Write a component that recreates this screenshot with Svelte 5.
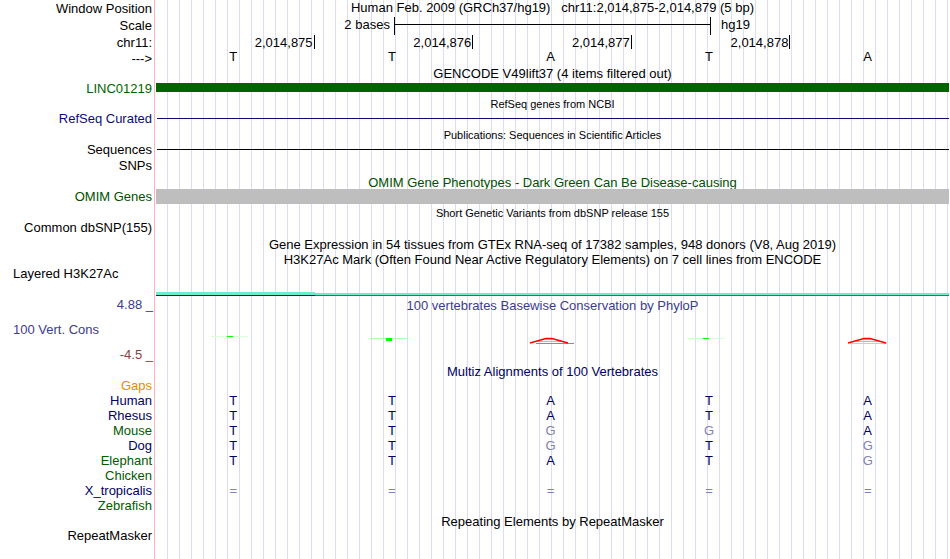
<script>
	// base positions shown in the window, one column each
	const ticks = ['2,014,875', '2,014,876', '2,014,877', '2,014,878', ''];
	const bases = ['T', 'T', 'A', 'T', 'A'];

	const species = [
		{ name: 'Gaps',         cls: 'gaps',  seq: '     ' },
		{ name: 'Human',        cls: 'navy',  seq: 'TTATA' },
		{ name: 'Rhesus',       cls: 'navy',  seq: 'TTATA' },
		{ name: 'Mouse',        cls: 'green', seq: 'TTGGA' },
		{ name: 'Dog',          cls: 'navy',  seq: 'TTGTG' },
		{ name: 'Elephant',     cls: 'green', seq: 'TTATG' },
		{ name: 'Chicken',      cls: 'green', seq: '     ' },
		{ name: 'X_tropicalis', cls: 'navy',  seq: '=====' },
		{ name: 'Zebrafish',    cls: 'green', seq: '     ' },
	];

	// bases that differ from human are drawn faded
	const differs = (c, i) => c != species[1].seq[i];
</script>

<svelte:head>
	<title>chr11:2,014,875-2,014,879</title>
</svelte:head>

<main>
	<section class="position">
		<div class="row">
			<div class="label">Window Position</div>
			<h1 class="title">Human Feb. 2009 (GRCh37/hg19) &nbsp; chr11:2,014,875-2,014,879 (5 bp)</h1>
		</div>
		<div class="row ruler">
			<div class="label">Scale</div>
			<div class="scale"><span>2 bases</span><i></i><span>hg19</span></div>
		</div>
		<div class="row">
			<div class="label">chr11:</div>
			<div class="cols ticks">
				{#each ticks as t}<span>{t}</span>{/each}
			</div>
		</div>
		<div class="row">
			<div class="label">---&gt;</div>
			<div class="cols bases">
				{#each bases as b}<span>{b}</span>{/each}
			</div>
		</div>
	</section>

	<section>
		<h2 class="title">GENCODE V49lift37 (4 items filtered out)</h2>
		<div class="row short">
			<div class="label gene">LINC01219</div>
			<div class="bar"></div>
		</div>
	</section>

	<section>
		<h2 class="title small">RefSeq genes from NCBI</h2>
		<div class="row">
			<div class="label refseq">RefSeq Curated</div>
			<div class="line refseq"></div>
		</div>
	</section>

	<section>
		<h2 class="title small">Publications: Sequences in Scientific Articles</h2>
		<div class="row short">
			<div class="label">Sequences</div>
			<div class="line"></div>
		</div>
		<div class="row snps">
			<div class="label">SNPs</div>
		</div>
	</section>

	<section>
		<h2 class="title low omim">OMIM Gene Phenotypes - Dark Green Can Be Disease-causing</h2>
		<div class="row short">
			<div class="label omim">OMIM Genes</div>
			<div class="bar omim-bar"></div>
		</div>
	</section>

	<section>
		<h2 class="title small dbsnp">Short Genetic Variants from dbSNP release 155</h2>
		<div class="row">
			<div class="label">Common dbSNP(155)</div>
		</div>
	</section>

	<section>
		<h2 class="title low">Gene Expression in 54 tissues from GTEx RNA-seq of 17382 samples, 948 donors (V8, Aug 2019)</h2>
	</section>

	<section>
		<h2 class="title low">H3K27Ac Mark (Often Found Near Active Regulatory Elements) on 7 cell lines from ENCODE</h2>
		<div class="row layered">
			<div class="label left">Layered H3K27Ac</div>
			<div class="signal"><i></i><i></i></div>
		</div>
	</section>

	<section class="phylop">
		<div class="row short">
			<div class="label">4.88 _</div>
			<h2 class="title low">100 vertebrates Basewise Conservation by PhyloP</h2>
		</div>
		<div class="row wiggle">
			<div class="limits">
				<div class="label left">100 Vert. Cons</div>
				<div class="label min">-4.5 _</div>
			</div>
			<div class="cols scores">
				<svg viewBox="0 0 48 8" shape-rendering="crispEdges">
					<rect x="2" y="0" width="37" height="1" fill="#d8ffd8" />
					<rect x="18" y="0" width="6" height="1" fill="#00ff00" />
				</svg>
				<svg viewBox="0 0 48 8" shape-rendering="crispEdges">
					<rect x="2" y="2" width="38" height="1" fill="#b0ffb0" />
					<rect x="18" y="2" width="6" height="3" fill="#00ff00" />
				</svg>
				<svg viewBox="0 0 48 8">
					<path d="M10 7.5H48" stroke="#8080f0" />
					<path d="M12 5.5H36" stroke="#ffa0a0" />
					<path d="M4 7L20 2.6H26L42 7" fill="none" stroke="#ff0000" stroke-width="1.6" />
				</svg>
				<svg viewBox="0 0 48 8" shape-rendering="crispEdges">
					<rect x="2" y="2" width="38" height="1" fill="#d8ffd8" />
					<rect x="18" y="2" width="6" height="1" fill="#00ff00" />
				</svg>
				<svg viewBox="0 0 48 8">
					<path d="M6 7.5H43" stroke="#e8c8a0" />
					<path d="M12 5.5H34" stroke="#ffa0a0" />
					<path d="M4 7L20 2.6H26L42 7" fill="none" stroke="#ff0000" stroke-width="1.6" />
				</svg>
			</div>
		</div>
	</section>

	<section>
		<h2 class="title low navy">Multiz Alignments of 100 Vertebrates</h2>
		<table>
			<tbody>
				{#each species as s}
					<tr>
						<th class={s.cls} scope="row">{s.name}</th>
						{#each s.seq.split('') as c, i}
							<td class:differs={differs(c, i)}>{c}</td>
						{/each}
					</tr>
				{/each}
			</tbody>
		</table>
	</section>

	<section>
		<h2 class="title low">Repeating Elements by RepeatMasker</h2>
		<div class="row short">
			<div class="label">RepeatMasker</div>
		</div>
	</section>
</main>

<style>
	:global(body) { margin:0; background:#fff }

	main {
		min-height:100vh; box-sizing:border-box; padding-right:1px;
		font:13px/15px "Liberation Sans", Arial, Helvetica, sans-serif; color:#000;
		/* pink divider, then a guide line every 12px */
		background:
			linear-gradient(#ffb4b4, #ffb4b4) 154px 0 / 1px 100% no-repeat,
			repeating-linear-gradient(90deg, #dcdcf8 0 1px, transparent 1px 12px) 167px 0 no-repeat;
	}

	.row { display:grid; grid-template-columns:156px 1fr; height:16px; line-height:16px }
	.row.short { height:15px; line-height:15px }
	.row.ruler { height:18px; line-height:18px }
	.row.snps { height:17px; line-height:18px }
	.label { text-align:right; padding-right:4px; white-space:nowrap }
	.label.left { text-align:left; padding-left:13px }
	.position .label { line-height:18px }
	.position .ruler .label { line-height:20px }

	.title { margin:0 0 0 156px; height:15px; font-size:13px; line-height:15px; font-weight:normal; text-align:center; white-space:nowrap }
	.row .title { margin-left:0 }
	.title.low { line-height:17px }
	.title.small { font-size:11px; line-height:16px }
	.title.dbsnp { height:16px; line-height:18px }

	.scale { display:grid; grid-template-columns:30% 40% 30% }
	.scale span:first-child { text-align:right; padding-right:4px }
	.scale span:last-child { padding-left:10px }
	.scale i { margin:1px 0; border:solid #000; border-width:0 1px; background:linear-gradient(#000, #000) 0 7px / 100% 1px no-repeat }

	.cols { display:grid; grid-template-columns:repeat(5, 1fr) }
	.ticks { padding-top:1px }
	.ticks span { height:14px; border-right:1px solid #000; padding-right:1px; text-align:right }
	.ticks span:last-child { border:0 }
	.bases span { padding-right:4px; text-align:center; line-height:13px }

	.bar { margin:2px 0 4px; background:#006400 }
	.omim-bar { margin:0; background:#bebebe }
	.line { height:1px; margin:7px 0 0 1px; background:#000 }
	.line.refseq { background:#0c0c78 }

	.layered { height:31px }
	.signal { align-self:end; display:flex; align-items:flex-end; margin-bottom:1px }
	.signal i { height:2px; width:80%; background:#6eebc8; border-bottom:1px solid #5a645a }
	.signal i:first-child { height:3px; width:20%; border-color:#141e50 }

	.phylop { color:#3c3c8c }
	.phylop .label:not(.left) { padding-right:3px }
	.wiggle { height:51px }
	.limits { display:flex; flex-direction:column; justify-content:space-between; padding:10px 0 0 }
	.min { color:#8c3c3c }
	.scores { align-items:start; justify-items:center; padding-top:24px }
	.scores svg { width:48px; height:8px; margin-right:4px }

	table { width:100%; table-layout:fixed; border-collapse:collapse; color:#000064 }
	tr { height:15px }
	th { width:152px; padding:0 4px 0 0; font-weight:normal; text-align:right }
	td { padding:0 4px 0 0; text-align:center }
	td.differs { color:#8080b8 }

	.gene { color:#006400 }
	.refseq { color:#0c0c78 }
	.omim { color:#005000 }
	.navy { color:#000064 }
	.green { color:#005a00 }
	.gaps { color:#e68c00 }
</style>
